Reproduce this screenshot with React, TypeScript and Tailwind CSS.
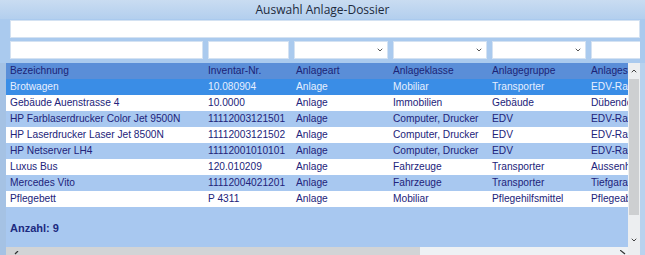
import { ChevronDown, ChevronUp } from "lucide-react";

// Anlage rows shown in the dossier picker
const rows = [
	["Brotwagen", "10.080904", "Anlage", "Mobiliar", "Transporter", "EDV-Raum"],
	["Gebäude Auenstrasse 4", "10.0000", "Anlage", "Immobilien", "Gebäude", "Dübendorf"],
	["HP Farblaserdrucker Color Jet 9500N", "11112003121501", "Anlage", "Computer, Drucker", "EDV", "EDV-Raum"],
	["HP Laserdrucker Laser Jet 8500N", "11112003121502", "Anlage", "Computer, Drucker", "EDV", "EDV-Raum"],
	["HP Netserver LH4", "11112001010101", "Anlage", "Computer, Drucker", "EDV", "EDV-Raum"],
	["Luxus Bus", "120.010209", "Anlage", "Fahrzeuge", "Transporter", "Aussenhof"],
	["Mercedes Vito", "11112004021201", "Anlage", "Fahrzeuge", "Transporter", "Tiefgarage"],
	["Pflegebett", "P 4311", "Anlage", "Mobiliar", "Pflegehilfsmittel", "Pflegeabteilung"],
];

const headers = ["Bezeichnung", "Inventar-Nr.", "Anlageart", "Anlageklasse", "Anlagegruppe", "Anlagestandort"];

function Cells({ cells }: { cells: string[] }) {
	return (
		<>
			<div className="w-[198px] shrink-0 overflow-hidden whitespace-nowrap pl-[4px]">{cells[0]}</div>
			<div className="w-[88px] shrink-0 overflow-hidden whitespace-nowrap pl-[4px]">{cells[1]}</div>
			<div className="w-[97px] shrink-0 overflow-hidden whitespace-nowrap pl-[4px]">{cells[2]}</div>
			<div className="w-[99px] shrink-0 overflow-hidden whitespace-nowrap pl-[4px]">{cells[3]}</div>
			<div className="w-[99px] shrink-0 overflow-hidden whitespace-nowrap pl-[4px]">{cells[4]}</div>
			<div className="w-[100px] shrink-0 whitespace-nowrap pl-[4px]">{cells[5]}</div>
		</>
	);
}

function Select({ w }: { w: string }) {
	return (
		<div className={`${w} h-[18px] shrink-0 bg-white border border-[#d4e2f2] flex items-center justify-end pr-[3px]`}>
			<ChevronDown className="w-[8px] h-[8px] text-[#555]" strokeWidth={3} />
		</div>
	);
}

export default function App() {
	return (
		<div className="w-[645px] h-[255px] overflow-hidden flex flex-col bg-[#aacaee] font-['Liberation_Sans',Arial,sans-serif] text-[10.2px] text-[#22237a]">
			{/* Title bar */}
			<div className="h-[19px] shrink-0 flex items-center justify-center bg-gradient-to-b from-[#c9dcf1] to-[#b3cfee] font-['Open_Sans',sans-serif] text-[12px] text-[#1d2a3c]">
				Auswahl Anlage-Dossier
			</div>

			{/* Filters */}
			<div className="pl-[10px] pr-[5px] pt-[1px]">
				<div className="h-[18px] bg-white border border-[#d4e2f2]" />
				<div className="mt-[3px] flex gap-[5px] overflow-hidden">
					<div className="w-[193px] h-[18px] shrink-0 bg-white border border-[#d4e2f2]" />
					<div className="w-[81px] h-[18px] shrink-0 bg-white border border-[#d4e2f2]" />
					<Select w="w-[94px]" />
					<Select w="w-[94px]" />
					<Select w="w-[94px]" />
					<div className="w-[80px] h-[18px] shrink-0 bg-white border border-[#d4e2f2]" />
				</div>
			</div>

			{/* Grid */}
			<div className="mt-[4px] flex flex-1 min-h-0">
				<div className="w-[6px] shrink-0 bg-[#a5c2e4]" />
				<div className="w-[622px] shrink-0 flex flex-col overflow-hidden">
					<div className="flex h-[16px] shrink-0 items-center bg-[#5a8ed8] text-[#1c2375]">
						<Cells cells={headers} />
					</div>
					{rows.map((r, i) => (
						<div
							key={r[0]}
							className={`flex h-[16px] shrink-0 items-center ${
								i === 0
									? "bg-[#3a8de6] text-[#e6efff]"
									: i % 2 === 1
										? "bg-white"
										: "bg-[#a8c8f0]"
							}`}
						>
							<Cells cells={r} />
						</div>
					))}
					<div className="flex-1 bg-[#a8c8f0] flex items-end pl-[4px] pb-[11px]">
						<span className="font-bold text-[11px] text-[#1c2a80]">Anzahl: 9</span>
					</div>
					{/* Horizontal scrollbar */}
					<div className="h-[8px] shrink-0 flex bg-[#eef1f4] relative">
						<div className="w-[414px] bg-[#d2d4d6]" />
						<svg className="absolute left-[8px] top-[4px]" width="5" height="4" viewBox="0 0 5 4">
							<path d="M4 0 L1 3" stroke="#333" strokeWidth="1.2" />
						</svg>
						<svg className="absolute left-[614px] top-[3px]" width="6" height="5" viewBox="0 0 6 5">
							<path d="M0 0 L5 4" stroke="#333" strokeWidth="1.2" />
						</svg>
					</div>
				</div>
				{/* Vertical scrollbar */}
				<div className="w-[12px] shrink-0 flex flex-col bg-[#eceef0]">
					<div className="h-[16px] flex items-center justify-center">
						<ChevronUp className="w-[8px] h-[8px] text-[#444]" strokeWidth={3} />
					</div>
					<div className="h-[136px] mx-[1px] bg-[#cdcfd1]" />
					<div className="flex-1 flex items-end justify-center pb-[11px]">
						<ChevronDown className="w-[8px] h-[8px] text-[#444]" strokeWidth={3} />
					</div>
				</div>
				<div className="flex-1 bg-[#b8d2ee]" />
			</div>
		</div>
	);
}
